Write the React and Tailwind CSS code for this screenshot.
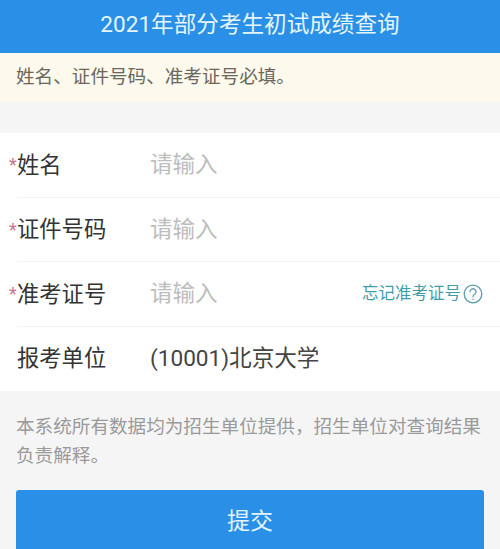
const fontStack = "font-['Roboto','Noto_Sans_CJK_SC',sans-serif]";

function Field({ label, required, children, last }) {
  return (
    <div className="relative flex h-[64.5px] items-center pl-[17px]">
      {required && (
        <span className="absolute left-[9px] top-[22px] text-[18px] leading-[20px] text-[#c9748a]">*</span>
      )}
      <div className="w-[133px] shrink-0 text-[22.3px] text-[#333333]">{label}</div>
      <div className="flex-1">{children}</div>
      {!last && <div className="absolute bottom-0 left-[17px] right-0 h-px bg-[#f3f3f3]"></div>}
    </div>
  );
}

export default function App() {
  const placeholder = <span className="text-[22.5px] text-[#bdbdbd]">请输入</span>;

  return (
    <div className={`h-[549px] w-[500px] overflow-hidden bg-[#f5f5f6] ${fontStack}`}>
      <div className="flex h-[53px] items-center justify-center bg-[#2a8fe6] pb-[4px] text-[22.6px] text-[#e4f6fb]">
        2021年部分考生初试成绩查询
      </div>
      <div className="flex h-[49px] items-center bg-[#fdf9ec] px-4 pt-[1px] text-[18.6px] text-[#6b675c]">
        姓名、证件号码、准考证号必填。
      </div>

      <div className="mt-[31px] bg-white">
        <Field label="姓名" required>{placeholder}</Field>
        <Field label="证件号码" required>{placeholder}</Field>
        <Field label="准考证号" required>
          <div className="flex items-center justify-between pr-[17px]">
            {placeholder}
            <span className="flex items-center text-[16.5px] text-[#3f9cab]">
              忘记准考证号
              <svg className="ml-[2px] h-[20px] w-[20px]" viewBox="0 0 20 20" fill="none" stroke="#5c9cab" strokeWidth="1.3" strokeLinecap="round">
                <circle cx="10" cy="10" r="8.8" />
                <path d="M7 7.8a3 3 0 1 1 4.6 2.5c-1 .6-1.6 1.2-1.6 2.5" />
                <path d="M10 15.2v.2" />
              </svg>
            </span>
          </div>
        </Field>
        <Field label="报考单位" last>
          <span className="text-[22.6px] text-[#444444]">(10001)北京大学</span>
        </Field>
      </div>

      <p className="mt-[22px] px-4 text-[18.6px] leading-[29px] text-[#9a9a9a]">
        本系统所有数据均为招生单位提供，招生单位对查询结果负责解释。
      </p>

      <button className="mx-4 mt-[19px] flex h-[70px] w-[468px] items-center justify-center rounded-[3px] bg-[#2a8fe6] pb-[6px] text-[23px] text-[#e4f6fb]">
        提交
      </button>
    </div>
  );
}
